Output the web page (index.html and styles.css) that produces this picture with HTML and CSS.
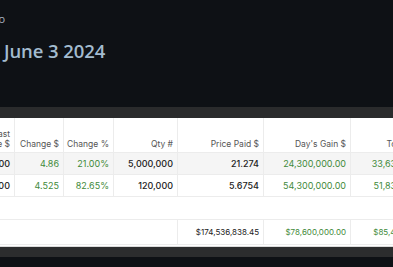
FILE: index.html
```html
<!DOCTYPE html>
<html>
<head>
<meta charset="utf-8">
<link rel="stylesheet" href="styles.css">
</head>
<body>
<div class="page">
  <header class="top">
    <div class="crumb">Portfolio</div>
    <h1 class="title">June 3 2024</h1>
  </header>
  <div class="toolbar"></div>
  <div class="card">
    <table class="grid">
      <colgroup>
        <col class="c-last"><col class="c-chg"><col class="c-pct"><col class="c-qty"><col class="c-paid"><col class="c-day"><col class="c-tot">
      </colgroup>
      <thead>
        <tr>
          <th>Last<br>Price $</th>
          <th>Change $</th>
          <th>Change %</th>
          <th>Qty #</th>
          <th>Price Paid $</th>
          <th>Day's Gain $</th>
          <th>Total Gain $</th>
        </tr>
      </thead>
      <tbody>
        <tr class="alt">
          <td>28.00</td>
          <td class="pos">4.86</td>
          <td class="pos">21.00%</td>
          <td>5,000,000</td>
          <td>21.274</td>
          <td class="pos">24,300,000.00</td>
          <td class="pos">33,630,000.00</td>
        </tr>
        <tr>
          <td>10.00</td>
          <td class="pos">4.525</td>
          <td class="pos">82.65%</td>
          <td>120,000</td>
          <td>5.6754</td>
          <td class="pos">54,300,000.00</td>
          <td class="pos">51,830,000.00</td>
        </tr>
        <tr class="spacer">
          <td colspan="7"></td>
        </tr>
        <tr class="total">
          <td colspan="4" class="blank"></td>
          <td>$174,536,838.45</td>
          <td class="pos">$78,600,000.00</td>
          <td class="pos">$85,460,000.00</td>
        </tr>
      </tbody>
    </table>
  </div>
  <div class="footbar"></div>
</div>
</body>
</html>
```
FILE: styles.css
```css
html, body {
  margin: 0;
  padding: 0;
  background: #0e1115;
  overflow: hidden;
}
.page {
  width: 393px;
  height: 267px;
  overflow: hidden;
  font-family: Inter, "Noto Sans", sans-serif;
}
.top {
  height: 107px;
  box-sizing: border-box;
  padding-top: 12px;
}
.crumb {
  font-family: "Open Sans", sans-serif;
  font-size: 11px;
  line-height: 14px;
  color: #a9b4c2;
  width: 60px;
  margin-left: -55px;
  text-align: right;
}
.title {
  margin: 13px 0 0 4px;
  font-family: "Open Sans", sans-serif;
  font-weight: 600;
  font-size: 18.5px;
  line-height: 24px;
  letter-spacing: -0.1px;
  color: #a3bccf;
  white-space: nowrap;
}
.toolbar {
  height: 11px;
  background: #2a2b2c;
}
.card {
  background: #fff;
  height: 128px;
  overflow: hidden;
}
.grid {
  border-collapse: collapse;
  table-layout: fixed;
  margin-left: -40px;
  width: 478px;
}
.c-last { width: 54px; }
.c-chg { width: 49px; }
.c-pct { width: 50px; }
.c-qty { width: 64px; }
.c-paid { width: 86px; }
.c-day { width: 87px; }
.c-tot { width: 88px; }
.grid th, .grid td {
  text-align: right;
  padding: 0 4px 0 0;
  white-space: nowrap;
  border-left: 1px solid #ececec;
  border-bottom: 1px solid #ececec;
}
.grid th {
  height: 34px;
  vertical-align: bottom;
  padding-bottom: 3px;
  font-weight: 400;
  font-size: 8.5px;
  line-height: 10px;
  color: #555;
  box-sizing: border-box;
}
.grid td {
  height: 22px;
  font-size: 9px;
  font-weight: 500;
  color: #222;
  box-sizing: border-box;
}
.grid tr.alt td { background: #f5f5f5; }
.grid td.pos { color: #3f8a3a; font-weight: 400; }
.grid tr.spacer td {
  height: 23px;
  border-left: none;
}
.grid tr.total td {
  height: 25px;
  font-weight: 400;
  font-size: 8px;
}
.grid tr.total td.blank { border-left: none; }
.footbar {
  height: 10px;
  background: #2c2d2e;
  border-top: 1px solid #dcdcdc;
}
```
